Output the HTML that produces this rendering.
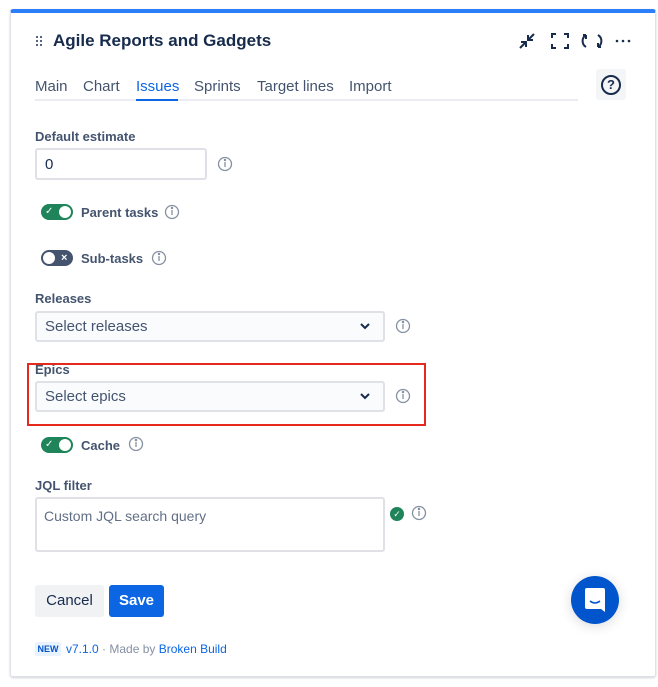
<!DOCTYPE html>
<html><head><style>
*{box-sizing:border-box;margin:0;padding:0}
body{width:658px;height:687px;background:#fff;font-family:"Liberation Sans",sans-serif;position:relative;overflow:hidden;color:#172b4d}
.card{position:absolute;left:10px;top:9px;width:646px;height:668px;border:1px solid #dfe1e6;border-top:4px solid #2d7ff9;border-radius:3px;box-shadow:0 1px 2px rgba(9,30,66,.2)}
.a{position:absolute}
.lbl{font-size:13px;font-weight:bold;color:#44546f}
.inp{border:2px solid #dfe1e6;border-radius:3px;background:#fff;font-size:15px;color:#172b4d}
.sel{border:2px solid #dfe1e6;border-radius:3px;background:#fafbfc;font-size:15px;color:#44546f;padding-left:8px;line-height:28px}
.tog{width:32px;height:16px;border-radius:8px}
.tog .k{position:absolute;top:2px;width:12px;height:12px;border-radius:6px;background:#fff}
.tog span{line-height:16px}
.tl{font-size:13px;font-weight:bold;color:#44546f}
.tab{font-size:15px;color:#44546f;top:78px}
</style></head><body>
<div class="card"></div>
<svg class="a" style="left:35px;top:35px" width="8" height="12" fill="#44546f"><circle cx="2" cy="2" r="1.1"/><circle cx="6" cy="2" r="1.1"/><circle cx="2" cy="6" r="1.1"/><circle cx="6" cy="6" r="1.1"/><circle cx="2" cy="10" r="1.1"/><circle cx="6" cy="10" r="1.1"/></svg>
<div class="a" style="left:53px;top:31px;font-size:17px;font-weight:bold">Agile Reports and Gadgets</div>
<svg class="a" style="left:517px;top:31px" width="120" height="20" viewBox="0 0 120 20" fill="none" stroke="#172b4d" stroke-width="2">
<path d="M3 17l6-6M4 11h5v5M17 3l-6 6M11 4v5h5"/>
<path d="M35 7V3h4M47 3h4v4M51 13v4h-4M39 17h-4v-4"/>
<path d="M69 4a7 7 0 0 0 0 12M69 4v4M81 16a7 7 0 0 0 0-12M81 16v-4M66 4h3M81 16h3"/>
<circle cx="100" cy="10" r="1.3" fill="#172b4d" stroke="none"/><circle cx="106" cy="10" r="1.3" fill="#172b4d" stroke="none"/><circle cx="112" cy="10" r="1.3" fill="#172b4d" stroke="none"/>
</svg>
<div class="a tab" style="left:35px">Main</div>
<div class="a tab" style="left:83px">Chart</div>
<div class="a tab" style="left:136px;color:#0c66e4">Issues</div>
<div class="a tab" style="left:194px">Sprints</div>
<div class="a tab" style="left:257px">Target lines</div>
<div class="a tab" style="left:349px">Import</div>
<div class="a" style="left:35px;top:99px;width:543px;height:2px;background:#ebecf0"></div>
<div class="a" style="left:136px;top:99px;width:42px;height:2px;background:#0c66e4"></div>
<div class="a" style="left:596px;top:69px;width:30px;height:31px;background:#f4f5f7;border-radius:3px"></div>
<div class="a" style="left:601px;top:75px;width:20px;height:20px;border:2px solid #172b4d;border-radius:50%;font-size:13px;font-weight:bold;text-align:center;line-height:16px">?</div>

<div class="a lbl" style="left:35px;top:129px">Default estimate</div>
<div class="a inp" style="left:35px;top:148px;width:172px;height:32px;padding:6px 8px">0</div>

<div class="a tog" style="left:41px;top:204px;background:#1f845a"><div class="k" style="left:18px"></div><span class="a" style="left:4px;top:0;color:#fff;font-size:10px">✓</span></div>
<div class="a tl" style="left:81px;top:205px">Parent tasks</div>
<div class="a tog" style="left:41px;top:250px;background:#44546f"><div class="k" style="left:2px"></div><span class="a" style="left:20px;top:0;color:#fff;font-size:11px;font-weight:bold">×</span></div>
<div class="a tl" style="left:81px;top:251px">Sub-tasks</div>

<div class="a lbl" style="left:35px;top:291px">Releases</div>
<div class="a sel" style="left:35px;top:311px;width:350px;height:31px">Select releases</div>
<div class="a" style="left:27px;top:363px;width:399px;height:63px;border:2px solid #e5291f"></div>
<div class="a lbl" style="left:35px;top:362px">Epics</div>
<div class="a sel" style="left:35px;top:381px;width:350px;height:31px">Select epics</div>
<svg class="a" style="left:358px;top:320px" width="14" height="90" fill="none" stroke="#172b4d" stroke-width="2"><path d="M3 4l4 4 4-4M3 74l4 4 4-4"/></svg>

<div class="a tog" style="left:41px;top:437px;background:#1f845a"><div class="k" style="left:18px"></div><span class="a" style="left:4px;top:0;color:#fff;font-size:10px">✓</span></div>
<div class="a tl" style="left:81px;top:438px">Cache</div>

<div class="a lbl" style="left:35px;top:478px">JQL filter</div>
<div class="a inp" style="left:35px;top:497px;width:350px;height:55px;padding:9px 7px;color:#626f86;font-size:14px">Custom JQL search query</div>
<div class="a" style="left:390px;top:507px;width:14px;height:14px;border-radius:50%;background:#1f845a;color:#fff;font-size:9px;text-align:center;line-height:14px">✓</div>

<svg class="a" style="left:0;top:0" width="658" height="687" fill="none" stroke="#8590a2" stroke-width="1.3">
<g><circle cx="225" cy="164" r="6.5"/><path d="M225 162v5"/><circle cx="225" cy="160" r=".6"/></g>
<g><circle cx="172" cy="212" r="6.5"/><path d="M172 210v5"/><circle cx="172" cy="208" r=".6"/></g>
<g><circle cx="159" cy="258" r="6.5"/><path d="M159 256v5"/><circle cx="159" cy="254" r=".6"/></g>
<g><circle cx="403" cy="326" r="6.5"/><path d="M403 324v5"/><circle cx="403" cy="322" r=".6"/></g>
<g><circle cx="403" cy="396" r="6.5"/><path d="M403 394v5"/><circle cx="403" cy="392" r=".6"/></g>
<g><circle cx="136" cy="444" r="6.5"/><path d="M136 442v5"/><circle cx="136" cy="440" r=".6"/></g>
<g><circle cx="419" cy="513" r="6.5"/><path d="M419 511v5"/><circle cx="419" cy="509" r=".6"/></g>
</svg>

<div class="a" style="left:35px;top:585px;width:69px;height:32px;background:#f1f2f4;border-radius:3px;font-size:15px;text-align:center;line-height:32px">Cancel</div>
<div class="a" style="left:109px;top:585px;width:55px;height:32px;background:#0c66e4;border-radius:3px;font-size:15px;text-align:center;line-height:32px;color:#fff;font-weight:bold">Save</div>

<div class="a" style="left:571px;top:576px;width:48px;height:48px;border-radius:50%;background:#0055cc;box-shadow:0 2px 12px rgba(0,0,0,.15)"></div>
<svg class="a" style="left:584px;top:588px" width="24" height="26"><path d="M3 0h16a2 2 0 0 1 2 2v22l-4-3H3a2 2 0 0 1-2-2V2a2 2 0 0 1 2-2z" fill="#fff"/><path d="M6 13q5 4 10 0" stroke="#0055cc" stroke-width="1.5" fill="none"/></svg>

<div class="a" style="left:35px;top:642px;width:26px;height:14px;background:#e9f2ff;border-radius:2px;font-size:9px;font-weight:bold;color:#0055cc;text-align:center;line-height:14px">NEW</div>
<div class="a" style="left:66px;top:642px;font-size:12px;color:#8590a2"><span style="color:#0c66e4">v7.1.0</span> · Made by <span style="color:#0c66e4">Broken Build</span></div>
</body></html>
